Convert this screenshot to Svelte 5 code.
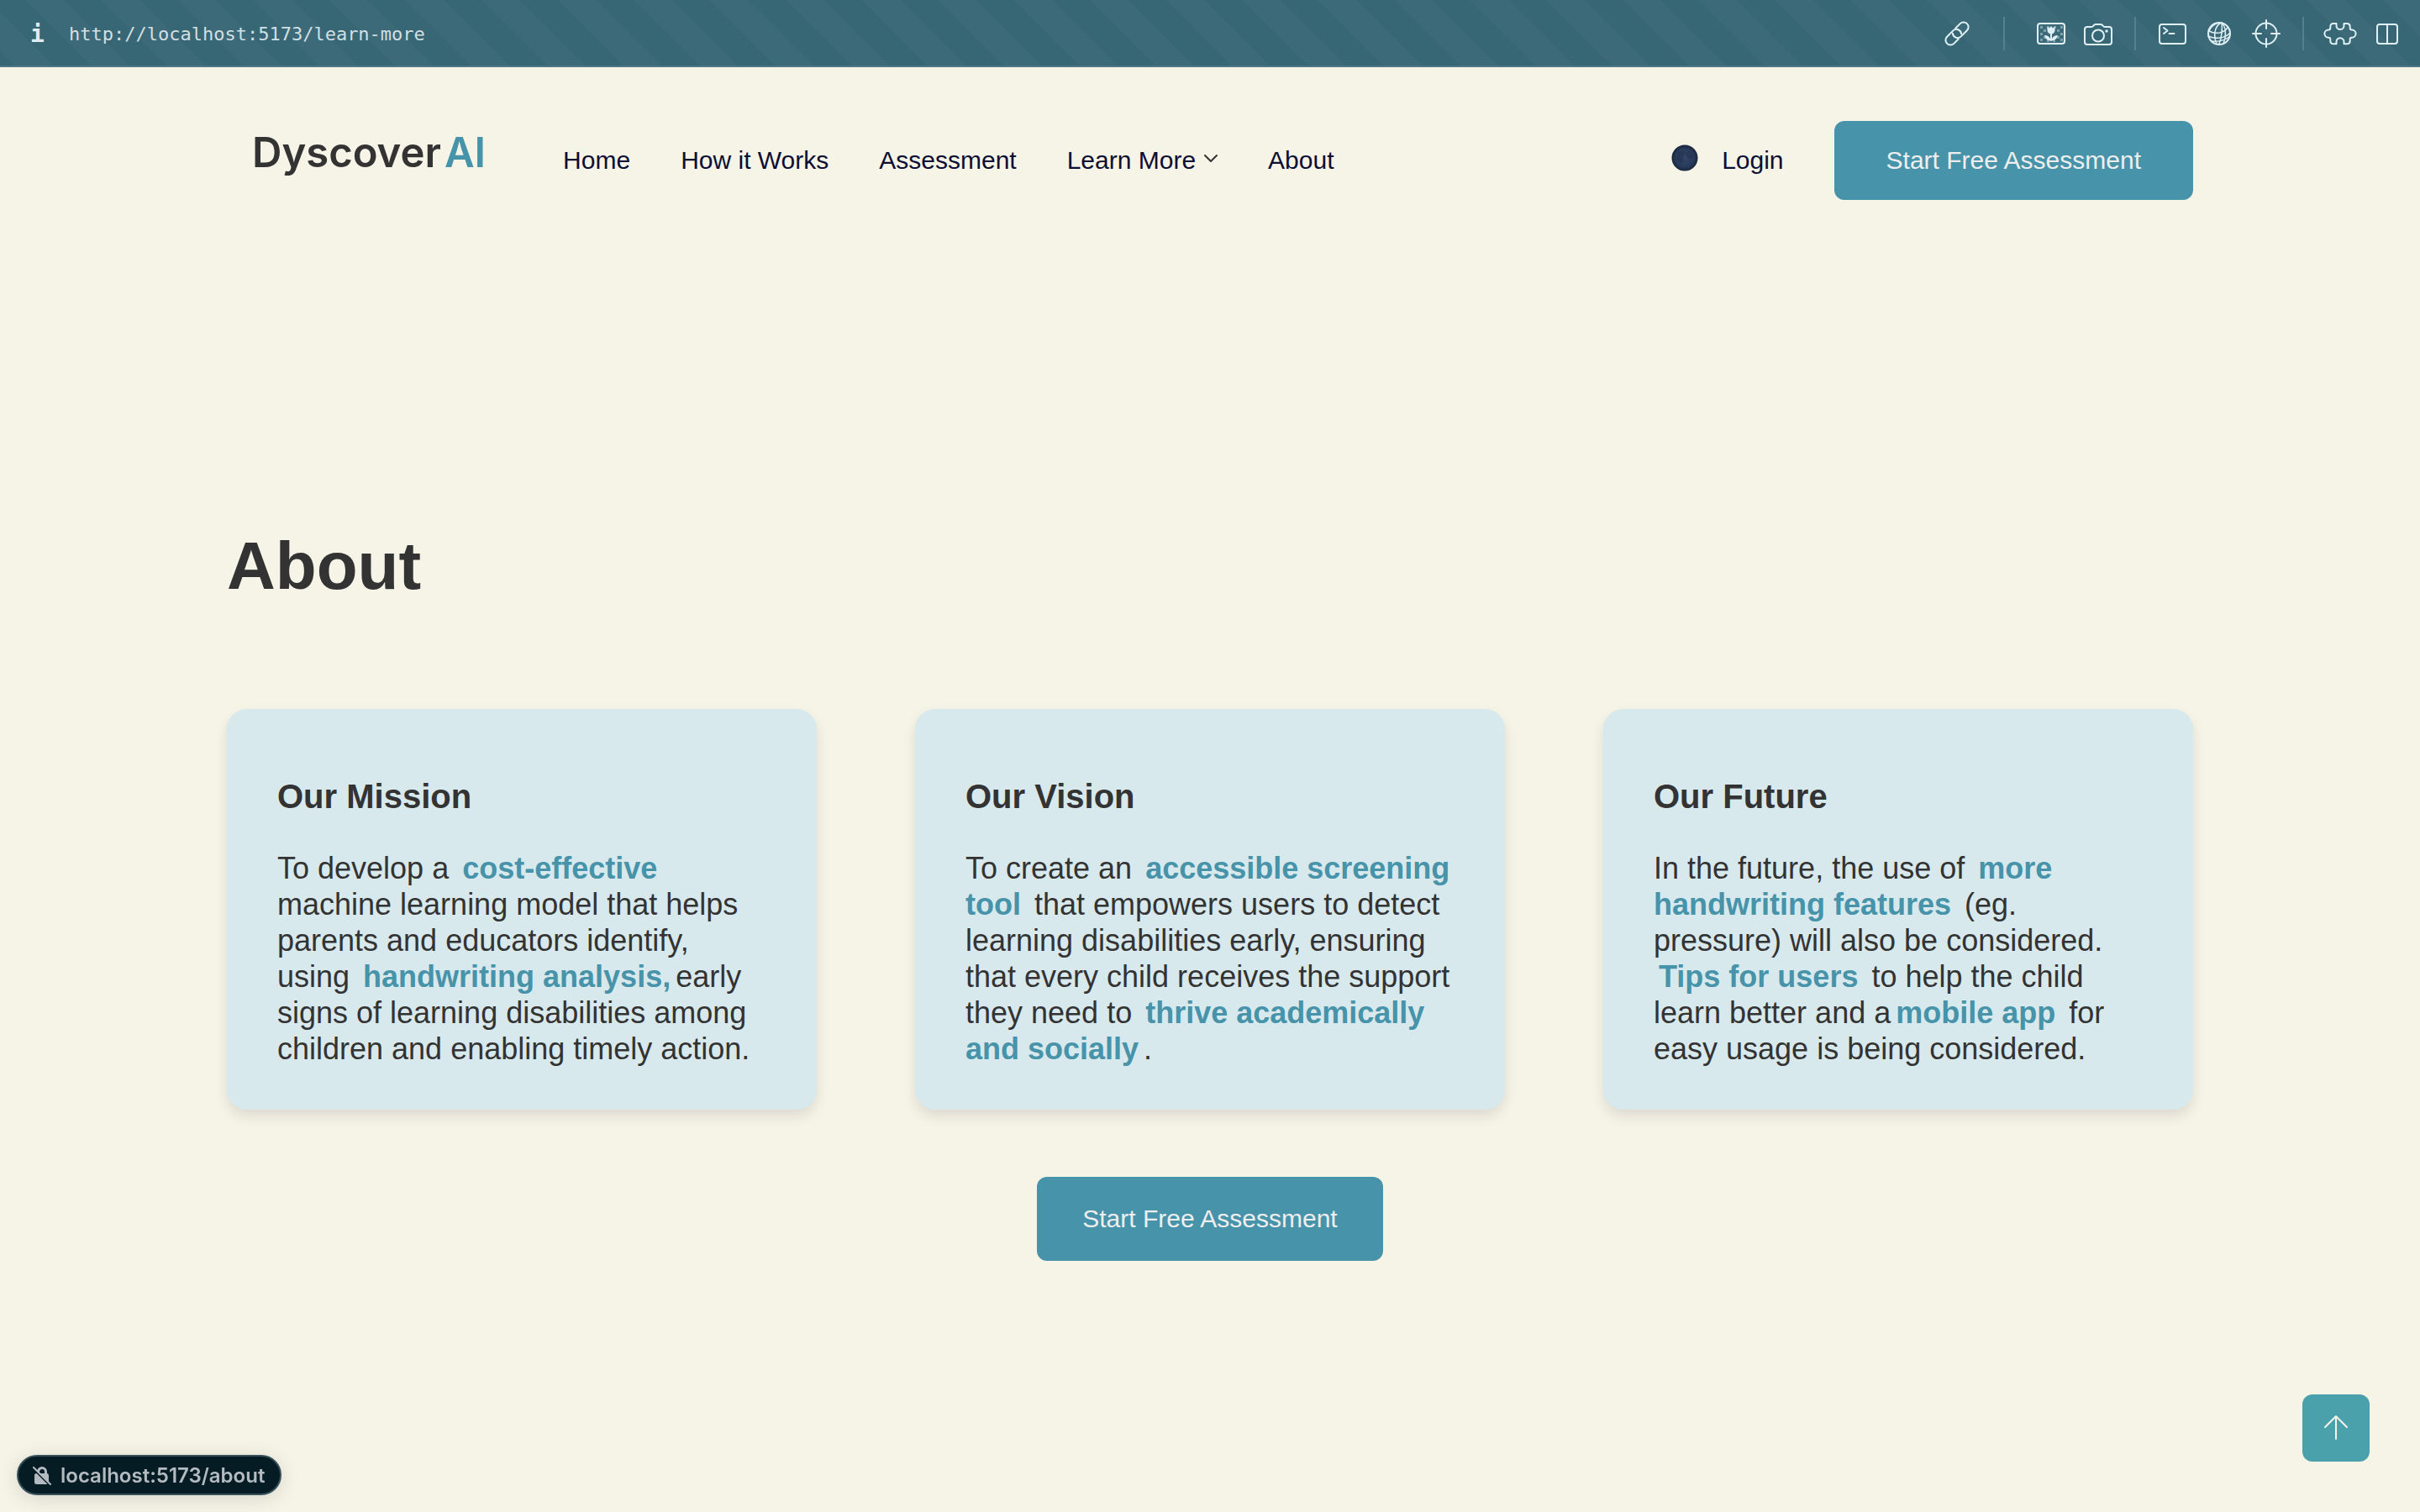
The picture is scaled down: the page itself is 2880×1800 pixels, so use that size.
<script>
  const links = ['Home', 'How it Works', 'Assessment', 'Learn More', 'About'];

  // Checkerboard squares behind the flower in the capture icon
  const checks = [
    [7, 11], [15, 11], [23, 11], [31, 11],
    [11, 15], [27, 15],
    [7, 19], [31, 19],
    [11, 23], [27, 23],
    [7, 26], [15, 27], [22, 27], [31, 26]
  ];

  const cards = [
    {
      title: 'Our Mission',
      parts: [
        { text: 'To develop a ' },
        { text: 'cost-effective', strong: true },
        { text: ' machine learning model that helps parents and educators identify, using ' },
        { text: 'handwriting analysis,', strong: true },
        { text: 'early signs of learning disabilities among children and enabling timely action.' }
      ]
    },
    {
      title: 'Our Vision',
      parts: [
        { text: 'To create an ' },
        { text: 'accessible screening tool', strong: true },
        { text: ' that empowers users to detect learning disabilities early, ensuring that every child receives the support they need to ' },
        { text: 'thrive academically and socially', strong: true },
        { text: '.' }
      ]
    },
    {
      title: 'Our Future',
      parts: [
        { text: 'In the future, the use of ' },
        { text: 'more handwriting features', strong: true },
        { text: ' (eg. pressure) will also be considered. ' },
        { text: 'Tips for users', strong: true },
        { text: ' to help the child learn better and a' },
        { text: 'mobile app', strong: true },
        { text: ' for easy usage is being considered.' }
      ]
    }
  ];
</script>

<div class="toolbar">
  <button class="tool info" aria-label="Site information">i</button>
  <span class="url">http://localhost:5173/learn-more</span>
  <div class="tools">
    <button class="tool" aria-label="Copy link">
      <svg viewBox="0 0 40 40">
        <g transform="rotate(-45 20 20)">
          <path d="M16.5 25.8H9a5.8 5.8 0 0 1 0-11.6h10a5.8 5.8 0 0 1 4.5 9.5" />
          <path d="M23.5 14.2H31a5.8 5.8 0 0 1 0 11.6H21a5.8 5.8 0 0 1-4.5-9.5" />
        </g>
      </svg>
    </button>
    <span class="divider wide"></span>
    <button class="tool" aria-label="Capture element">
      <svg viewBox="0 0 40 40">
        {#each checks as [x, y]}
          <rect class="check" {x} {y} width="3" height="3" />
        {/each}
        <rect x="4" y="8" width="32" height="24" rx="3" />
        <path class="solid" d="M15.5 11.500l2.500 2 2-2.500 2 2.500 2.500-2v4.500a4.500 4.500 0 0 1-9 0z" />
        <path d="M20 19v9" />
        <path class="solid" d="M19.500 28.500c-4 0-7-3-7.300-6.500 4 0 7 2.500 7.300 6.500zM20.500 28.500c4 0 7-3 7.300-6.500-4 0-7 2.500-7.300 6.500z" />
      </svg>
    </button>
    <button class="tool" aria-label="Take screenshot">
      <svg viewBox="0 0 40 40">
        <path d="M7 12h5c1 0 1.500-.3 2-1l1-1c.5-.7 1-1 2-1h6c1 0 1.500.3 2 1l1 1c.5.7 1 1 2 1h5c2 0 3 1 3 3v15c0 2-1 3-3 3H7c-2 0-3-1-3-3V15c0-2 1-3 3-3z" />
        <circle cx="20" cy="22.500" r="7" />
        <circle class="solid" cx="30" cy="17" r="1.700" />
      </svg>
    </button>
    <span class="divider"></span>
    <button class="tool" aria-label="Console">
      <svg viewBox="0 0 40 40">
        <rect x="5" y="9" width="31" height="23" rx="3" />
        <path d="M10 13l4.500 3.500L10 20M16.500 20h6" />
      </svg>
    </button>
    <button class="tool" aria-label="Network">
      <svg viewBox="0 0 40 40">
        <circle cx="20" cy="20" r="13" />
        <path class="thin" d="M22 7c-8 5-9 16-5 25M20 7c-6 1-11 6-12 10M23 7c1 9 0 17-3 25M23 7c5 5 6 15 2 25M8 17c7 4 17 3 22-4M7 23c8 4 20 3 26-4M11 29c7 1 16-1 21-5" />
      </svg>
    </button>
    <button class="tool" aria-label="Inspect element">
      <svg viewBox="0 0 40 40">
        <circle cx="20" cy="20" r="12.500" />
        <path d="M20 4v10M20 26v10M4 20h10M26 20h10" />
      </svg>
    </button>
    <span class="divider"></span>
    <button class="tool" aria-label="Extensions">
      <svg viewBox="0 0 40 40">
        <path d="M15.500 8H12c-2.500 0-3.700 1.300-3.700 3.800v1.700c0 1.300-.7 2-2 2H6a4.600 4.600 0 0 0 0 9.200h.3c1.300 0 2 .7 2 2v1.700c0 2.500 1.200 3.800 3.700 3.800h3.500v-2.500a4.500 4.500 0 0 1 9 0v2.500H28c2.500 0 3.700-1.300 3.700-3.800v-1.700c0-1.300.7-2 2-2h.3a4.600 4.600 0 0 0 0-9.200h-.3c-1.300 0-2-.7-2-2v-1.700C31.700 9.300 30.500 8 28 8h-3.500v2.500a4.500 4.500 0 0 1-9 0z" />
      </svg>
    </button>
    <button class="tool" aria-label="Split view">
      <svg viewBox="0 0 40 40">
        <rect x="8" y="9" width="24" height="23" rx="3" />
        <path d="M20 9v23" />
      </svg>
    </button>
  </div>
</div>

<div class="container">
  <header>
    <a class="logo" href="/">Dyscover<span>AI</span></a>
    <nav>
      {#each links as link}
        <a href="/{link.toLowerCase().replaceAll(' ', '-')}">
          {link}{#if link === 'Learn More'}<svg class="chevron" viewBox="0 0 16 16"><path d="M1 2l7 7 7-7" /></svg>{/if}
        </a>
      {/each}
    </nav>
    <div class="actions">
      <button class="theme" aria-label="Toggle dark mode">
        <svg viewBox="0 0 32 32">
          <defs>
            <radialGradient id="moon">
              <stop offset="0" stop-color="#32466a" />
              <stop offset="0.7" stop-color="#293b5b" />
              <stop offset="1" stop-color="#17243b" />
            </radialGradient>
          </defs>
          <circle cx="16" cy="16" r="15.500" fill="url(#moon)" />
          <path fill="#22334f" d="M7 12c2-5 8-5 9-2s-3 4-2 7 1 5-2 5-7-5-5-10zM18 9c3-2 8 1 8 5s-4 4-6 2-4-5-2-7z" opacity=".6" />
        </svg>
      </button>
      <a class="login" href="/login">Login</a>
      <button class="cta">Start Free Assessment</button>
    </div>
  </header>

  <main>
    <h1>About</h1>
    <div class="cards">
      {#each cards as card}
        <section class="card">
          <h3>{card.title}</h3>
          <p>{#each card.parts as part}{#if part.strong}<strong>{part.text}</strong>{:else}{part.text}{/if}{/each}</p>
        </section>
      {/each}
    </div>
    <button class="cta large">Start Free Assessment</button>
  </main>
</div>

<div class="status">
  <svg viewBox="0 0 24 24">
    <path class="shackle" d="M7.500 11V8a4.500 4.500 0 0 1 9 0v3" />
    <rect class="lock" x="3" y="10" width="17" height="13" rx="2.500" />
    <path class="gap" d="M2 5l20 20" />
    <path class="slash" d="M2 3l20 20" />
  </svg>
  <span>localhost:5173/about</span>
</div>

<button class="to-top" aria-label="Back to top">
  <svg viewBox="0 0 32 32"><path d="M16 29V2M3 15L16 2l13 13" /></svg>
</button>

<style>
  :global(body) {
    background: #f6f3e7;
    color: #333;
    font-family: 'Liberation Sans', Arial, sans-serif;
  }

  button {
    border: 0;
    padding: 0;
    background: none;
    color: inherit;
    font: inherit;
  }

  a {
    color: inherit;
    text-decoration: none;
  }

  svg {
    display: block;
    fill: none;
    stroke-linecap: round;
    stroke-linejoin: round;
  }

  .toolbar {
    display: flex;
    align-items: center;
    box-sizing: border-box;
    height: 80px;
    padding: 0 19px 0 36px;
    background: repeating-linear-gradient(
      45deg,
      #376774 0 14px,
      #3c6a78 14px 46px,
      #376774 46px 64px
    );
    box-shadow: inset 0 -2px #4d7685;
    color: #dfedf2;
    font-family: 'DejaVu Sans Mono', monospace;
    font-size: 22px;
  }

  .info {
    width: 16px;
    margin-right: 30px;
    font-size: 28px;
    font-weight: 700;
  }

  .url {
    color: #d2dfe3;
  }

  .tools {
    display: flex;
    align-items: center;
    gap: 16px;
    margin-left: auto;
  }

  .tools svg {
    width: 40px;
    height: 40px;
    stroke: #dff0f6;
    stroke-width: 2;
  }

  .tools .solid {
    fill: #dff0f6;
    stroke: none;
  }

  .tools .check {
    fill: #7f9fab;
    stroke: none;
  }

  .tools .thin {
    stroke-width: 1.5;
  }

  .divider {
    width: 2px;
    height: 40px;
    margin: 0 7px;
    background: #54818f;
  }

  .divider.wide {
    margin: 0 19px;
  }

  .container {
    max-width: 2340px;
    margin: 0 auto;
  }

  header {
    display: flex;
    align-items: center;
    margin-top: 64px;
    padding-left: 30px;
    color: #0c0f33;
    font-size: 30px;
    line-height: 36px;
  }

  .logo {
    margin-right: 92px;
    padding-bottom: 18px;
    color: #333;
    font-family: Inter, sans-serif;
    font-size: 49px;
    font-weight: 600;
  }

  .logo span {
    margin-left: 4px;
    color: #4693aa;
  }

  nav {
    display: flex;
    gap: 60px;
  }

  nav a {
    display: flex;
    align-items: center;
    gap: 10px;
  }

  .chevron {
    width: 16px;
    height: 16px;
    stroke: #333;
    stroke-width: 2;
  }

  .actions {
    display: flex;
    align-items: center;
    margin-left: auto;
  }

  .theme {
    padding-bottom: 6px;
  }

  .theme svg {
    width: 32px;
    height: 32px;
  }

  .login {
    margin: 0 60px 0 28px;
  }

  .cta {
    padding: 29px 62px;
    border-radius: 12px;
    background: #4693aa;
    color: #eee;
    font-size: 30px;
    line-height: 36px;
  }

  .cta.large {
    padding: 32px 54px;
  }

  main {
    display: flex;
    flex-direction: column;
    align-items: center;
    padding-top: 390px;
  }

  h1 {
    align-self: stretch;
    margin: 0;
    font-size: 80px;
    line-height: 92px;
  }

  .cards {
    display: grid;
    grid-template-columns: repeat(3, 1fr);
    gap: 5%;
    width: 100%;
    margin: 124px 0 80px;
  }

  .card {
    padding: 80px 60px 51px;
    border-radius: 24px;
    background: #d8e9ed;
    box-shadow: 0 8px 16px rgb(0 0 0 / 10%);
  }

  h3 {
    margin: 0 0 40px;
    font-size: 40px;
    line-height: 48px;
  }

  p {
    margin: 0;
    font-size: 36px;
    line-height: 43px;
  }

  strong {
    padding: 0 6px;
    color: #4693aa;
  }

  .status {
    position: fixed;
    bottom: 20px;
    left: 20px;
    display: flex;
    align-items: center;
    gap: 10px;
    box-sizing: border-box;
    height: 48px;
    padding: 0 18px 0 16px;
    border: 2px solid #37505a;
    border-radius: 24px;
    background: #061c24;
    box-shadow: 0 4px 24px rgb(0 0 0 / 12%);
    color: #b3bbc0;
    font-family: Inter, sans-serif;
    font-size: 24px;
    font-weight: 600;
  }

  .status svg {
    width: 24px;
    height: 24px;
    stroke-width: 2;
  }

  .status .lock {
    fill: #b3bbc0;
  }

  .status .shackle,
  .status .slash {
    stroke: #b3bbc0;
  }

  .status .shackle {
    stroke-width: 3;
  }

  .status .gap {
    stroke: #061c24;
  }

  .to-top {
    position: fixed;
    right: 60px;
    bottom: 60px;
    display: grid;
    place-items: center;
    width: 80px;
    height: 80px;
    border-radius: 12px;
    background: #4aa1ac;
  }

  .to-top svg {
    width: 32px;
    height: 32px;
    stroke: #f6f3e7;
    stroke-width: 2;
  }
</style>
